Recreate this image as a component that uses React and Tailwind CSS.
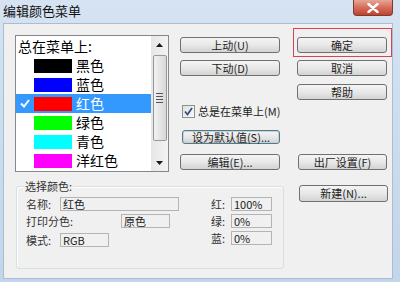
import React from 'react';

const font = { fontFamily: '"Noto Sans CJK SC", "Liberation Sans", sans-serif' };

const Btn = ({ children, className = '' }) => (
  <div
    className={`flex items-center justify-center whitespace-nowrap rounded-[3px] border border-[#707070] bg-linear-to-b from-[#f4f4f4] via-[#e8e8e8] to-[#d3d3d3] text-[11px] leading-none text-[#1e1e1e] ${className}`}
  >
    {children}
  </div>
);

const Field = ({ children, className = '' }) => (
  <div className={`flex h-[14px] items-center border border-[#b4b4b4] bg-[#f0f0f0] pl-[2px] text-[11px] leading-none text-[#222] ${className}`}>
    {children}
  </div>
);

const colors = [
  { name: '黑色', hex: 'bg-[#000000]' },
  { name: '蓝色', hex: 'bg-[#0000ff]' },
  { name: '红色', hex: 'bg-[#ff0000]', selected: true },
  { name: '绿色', hex: 'bg-[#00ff00]' },
  { name: '青色', hex: 'bg-[#00ffff]' },
  { name: '洋红色', hex: 'bg-[#ff00ff]' },
  { name: '黄色', hex: 'bg-[#ffff00]' },
];

const Arrow = ({ down }) => (
  <svg width="7" height="4" viewBox="0 0 7 4">
    <path d={down ? 'M0 0h7L3.5 4z' : 'M0 4h7L3.5 0z'} fill="#1a1a1a" />
  </svg>
);

export default function App() {
  return (
    <div className="flex h-[282px] w-[400px] flex-col overflow-hidden bg-linear-to-b from-[#d5e3f2] to-[#c3d5ea]" style={font}>
      {/* title bar */}
      <div className="flex h-[23px] items-start justify-between pl-[3px] pr-[7px]">
        <span className="pt-[2px] text-[13px] leading-[17px] text-[#111]">编辑颜色菜单</span>
        <div className="flex h-[16px] w-[40px] items-center justify-center rounded-b-[4px] border border-t-0 border-[#7a3b33] bg-linear-to-b from-[#e8a596] via-[#d56d5b] to-[#c0402f]">
          <svg width="12" height="10" viewBox="0 0 12 10">
            <path d="M1.5 1l9 8M10.5 1l-9 8" stroke="#fff" strokeWidth="2.4" strokeLinecap="round" />
          </svg>
        </div>
      </div>

      {/* client area */}
      <div className="mb-[3px] ml-[3px] mr-[7px] flex-1 border border-[#a9bdd4] bg-[#f0f0f0] pl-[11px] pt-[11px]">
        <div className="flex h-[137px]">
          {/* list box */}
          <div className="flex h-[137px] w-[154px] border border-[#828790] bg-white">
            <div className="flex-1 overflow-hidden text-[14px] leading-[19px] text-black">
              <div className="h-[20px] pl-[2px] pt-[1px]">总在菜单上:</div>
              {colors.map((c) => (
                <div
                  key={c.name}
                  className={`flex h-[19px] items-center ${c.selected ? 'bg-[#3399ff] text-white' : ''}`}
                >
                  <div className="flex w-[18px] justify-center">
                    {c.selected && (
                      <svg width="10" height="9" viewBox="0 0 10 9">
                        <path d="M1 4.5l3 3L9 1" stroke="#fff" strokeWidth="2" fill="none" />
                      </svg>
                    )}
                  </div>
                  <div className={`h-[14px] w-[38px] ${c.hex}`} />
                  <span className="ml-[4px]">{c.name}</span>
                </div>
              ))}
            </div>
            {/* scrollbar */}
            <div className="flex w-[17px] flex-col items-center bg-linear-to-r from-[#e6e6e6] to-[#f3f3f3]">
              <div className="flex h-[17px] items-center justify-center">
                <Arrow />
              </div>
              <div className="mt-[2px] flex h-[86px] w-[14px] items-center justify-center rounded-[2px] border border-[#979797] bg-linear-to-r from-[#f2f2f2] to-[#d8d8d8]">
                <div className="flex flex-col gap-[2px]">
                  <div className="h-px w-[7px] bg-[#555]" />
                  <div className="h-px w-[7px] bg-[#555]" />
                  <div className="h-px w-[7px] bg-[#555]" />
                  <div className="h-px w-[7px] bg-[#555]" />
                </div>
              </div>
              <div className="mt-auto flex h-[17px] items-center justify-center">
                <Arrow down />
              </div>
            </div>
          </div>

          {/* middle buttons */}
          <div className="ml-[11px] flex w-[100px] flex-col pt-[2px]">
            <Btn className="h-[16px] w-[100px]">上动(U)</Btn>
            <Btn className="mt-[7px] h-[16px] w-[100px]">下动(D)</Btn>
            <div className="ml-[2px] mt-[29px] flex h-[13px] items-center whitespace-nowrap">
              <div className="flex h-[13px] w-[13px] shrink-0 items-center justify-center border border-[#8e8f8f] bg-linear-to-br from-[#e0e0e0] to-[#fafafa]">
                <svg width="9" height="9" viewBox="0 0 9 9">
                  <path d="M1 4.5l2.5 3L8 1" stroke="#3b4f86" strokeWidth="1.8" fill="none" />
                </svg>
              </div>
              <span className="ml-[3px] text-[11px] leading-none text-[#222]">总是在菜单上(M)</span>
            </div>
            <Btn className="ml-[2px] mt-[12px] h-[14px] w-[98px] border-[#3c7fb1] shadow-[inset_0_0_0_1px_#a8dcf5]">设为默认值(S)...</Btn>
            <Btn className="mt-[10px] h-[16px] w-[100px]">编辑(E)...</Btn>
          </div>

          {/* right buttons */}
          <div className="ml-[17px] flex w-[90px] flex-col pt-[2px]">
            <div className="relative">
              <Btn className="h-[16px] w-[90px]">确定</Btn>
              <div className="absolute -bottom-[4px] -left-[4px] -right-[5px] -top-[9px] border border-[#d9434f]" />
            </div>
            <Btn className="mt-[7px] h-[16px] w-[90px]">取消</Btn>
            <Btn className="mt-[8px] h-[16px] w-[90px]">帮助</Btn>
            <Btn className="ml-[1px] mt-[54px] h-[16px] w-[89px]">出厂设置(F)</Btn>
          </div>
        </div>

        {/* bottom row */}
        <div className="mt-[13px] flex">
          <div className="relative ml-[1px] mt-[1px] flex h-[83px] w-[268px] rounded-[3px] border border-[#d5dfe5] pt-[10px] shadow-[inset_1px_1px_0_#fff]">
            <span className="absolute -top-[7px] left-[7px] bg-[#f0f0f0] px-px text-[11px] leading-[12px] text-[#333]">选择颜色:</span>
            <div className="flex w-[185px] flex-col pl-[9px] text-[11px] leading-none text-[#333]">
              <div className="flex items-center">
                <span className="w-[34px]">名称:</span>
                <Field className="w-[119px]">红色</Field>
              </div>
              <div className="mt-[3px] flex items-center">
                <span className="w-[95px]">打印分色:</span>
                <Field className="w-[49px]">原色</Field>
              </div>
              <div className="mt-[5px] flex items-center">
                <span className="w-[34px]">模式:</span>
                <Field className="w-[49px]">RGB</Field>
              </div>
            </div>
            <div className="ml-[9px] flex flex-col text-[11px] leading-none text-[#333]">
              <div className="flex items-center">
                <span className="w-[20px]">红:</span>
                <Field className="w-[41px]">100%</Field>
              </div>
              <div className="mt-[3px] flex items-center">
                <span className="w-[20px]">绿:</span>
                <Field className="w-[41px]">0%</Field>
              </div>
              <div className="mt-[3px] flex items-center">
                <span className="w-[20px]">蓝:</span>
                <Field className="w-[41px]">0%</Field>
              </div>
            </div>
          </div>
          <Btn className="ml-[15px] h-[17px] w-[89px]">新建(N)...</Btn>
        </div>
      </div>
    </div>
  );
}
